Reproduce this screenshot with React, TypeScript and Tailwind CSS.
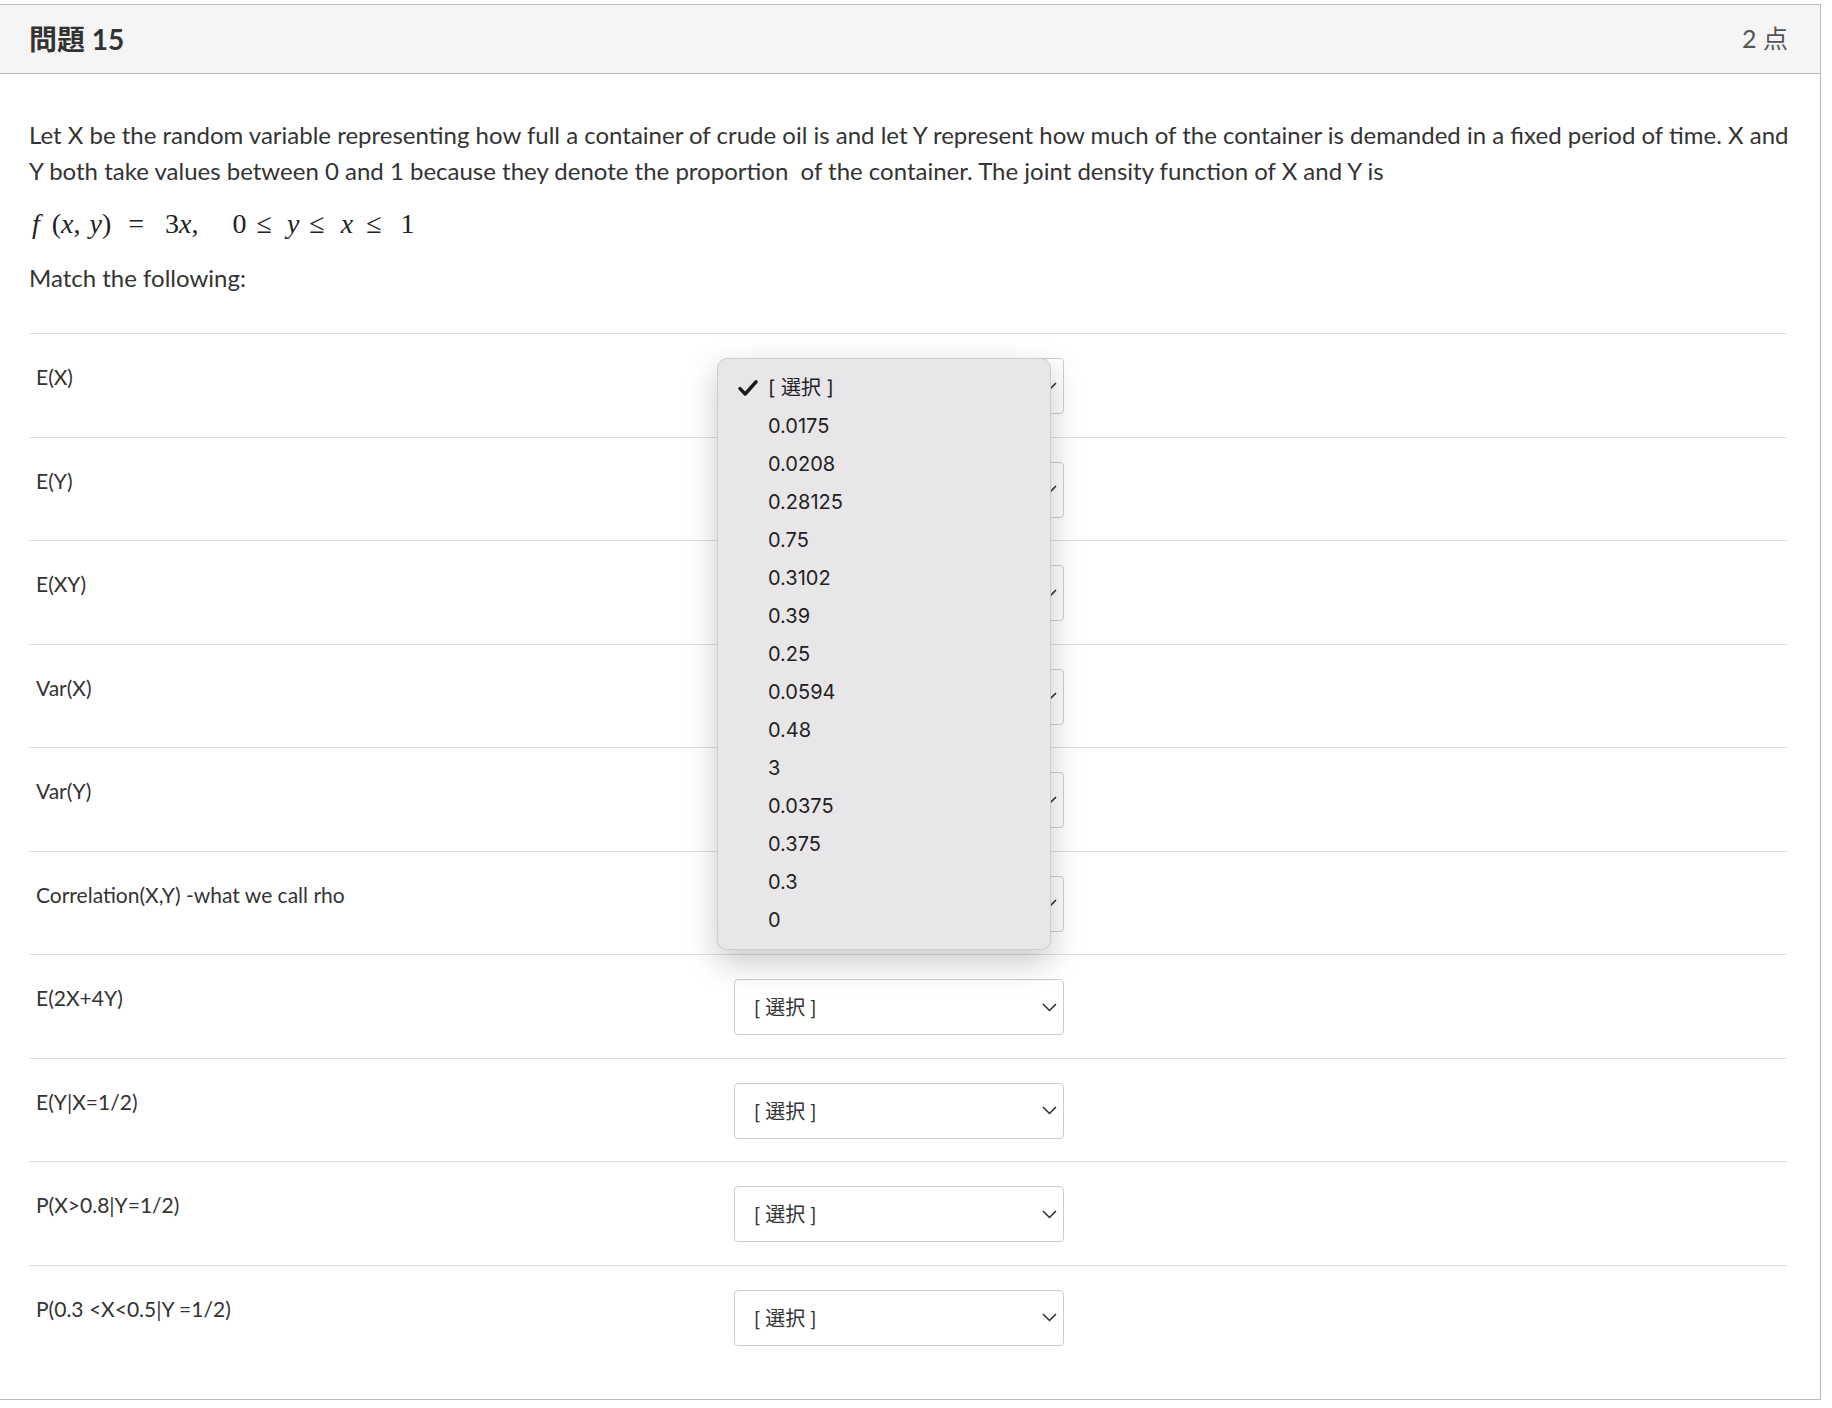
import { Fragment } from 'react';

const rows = [
  'E(X)',
  'E(Y)',
  'E(XY)',
  'Var(X)',
  'Var(Y)',
  'Correlation(X,Y) -what we call rho',
  'E(2X+4Y)',
  'E(Y|X=1/2)',
  'P(X>0.8|Y=1/2)',
  'P(0.3 <X<0.5|Y =1/2)',
];

const options = [
  '[ 選択 ]',
  '0.0175',
  '0.0208',
  '0.28125',
  '0.75',
  '0.3102',
  '0.39',
  '0.25',
  '0.0594',
  '0.48',
  '3',
  '0.0375',
  '0.375',
  '0.3',
  '0',
];

function Chevron() {
  return (
    <svg width="15" height="9" viewBox="0 0 15 9" fill="none">
      <polyline points="1,1 7.5,7.5 14,1" stroke="#333" strokeWidth="1.6" strokeLinejoin="round" />
    </svg>
  );
}

function Check() {
  return (
    <svg width="20" height="16" viewBox="0 0 20 16" fill="none">
      <path d="M2 8.6 L7.2 14 L18 1.8" stroke="#1a1a1a" strokeWidth="3.4" strokeLinecap="round" strokeLinejoin="round" />
    </svg>
  );
}

// the native select menu that is open over the first answer
function OpenMenu() {
  return (
    <div className="absolute left-[-17px] top-0 z-10 w-[334px] rounded-[10px] border border-[#cfcbcf] bg-[#e9e6e9] py-[10px] shadow-[0_12px_32px_rgba(0,0,0,0.22)] font-['Inter','Noto_Sans_CJK_JP',sans-serif] text-[20px] text-[#222]">
      {options.map((o, i) => (
        <div key={o} className="flex h-[38px] items-center">
          <div className="flex w-[50px] justify-end pr-[10px]">{i === 0 ? <Check /> : null}</div>
          <span>{o}</span>
        </div>
      ))}
    </div>
  );
}

function Select({ open }: { open?: boolean }) {
  return (
    <div className="relative w-[330px]">
      <div className="flex h-[56px] items-center justify-between rounded-[4px] border border-[#cdcdcd] bg-white pl-[19px] pr-[6px] text-[20px] text-[#333]">
        <span>[ 選択 ]</span>
        <Chevron />
      </div>
      {open ? <OpenMenu /> : null}
    </div>
  );
}

export default function App() {
  return (
    <div className="min-h-screen bg-white pt-[4px] font-['Lato','Noto_Sans_CJK_JP',sans-serif] text-[#333]">
      <div className="w-[1821px] border-b border-r border-t border-[#bcbcbc]">
        <div className="flex h-[69px] items-center justify-between border-b border-[#bcbcbc] bg-[#f5f5f5] pl-[29px] pr-[32px]">
          <h2 className="text-[28px] font-bold text-[#333]">問題 15</h2>
          <span className="text-[25px] text-[#555]">2 点</span>
        </div>

        <div className="pl-[29px] pr-[24px] pt-[43px] pb-[31px]">
          <p className="text-[24px] leading-[36px]">
            Let X be the random variable representing how full a container of crude oil is and let Y represent how much of
            the container is demanded in a fixed period of time. X and Y both take values between 0 and 1 because they
            denote the proportion&nbsp; of the container. The joint density function of X and Y is
          </p>

          <div className="mt-[17px] flex h-[36px] items-center pl-[3px] font-['Liberation_Serif',serif] text-[28px] text-[#222]">
            <i>f</i>
            <span className="ml-[12px]">(</span>
            <i>x</i>
            <span>,</span>
            <i className="ml-[9px]">y</i>
            <span>)</span>
            <span className="ml-[17px]">=</span>
            <span className="ml-[21px]">3</span>
            <i>x</i>
            <span>,</span>
            <span className="ml-[34px]">0</span>
            <span className="ml-[10px]">≤</span>
            <i className="ml-[15px]">y</i>
            <span className="ml-[10px]">≤</span>
            <i className="ml-[16px]">x</i>
            <span className="ml-[13px]">≤</span>
            <span className="ml-[19px]">1</span>
          </div>

          <p className="mt-[18px] text-[24px] leading-[36px]">Match the following:</p>

          <div className="mt-[37px] mr-[9px]">
            {rows.map((label, i) => (
              <Fragment key={label}>
                <div className="grid grid-cols-[705px_330px_1fr] items-start border-t border-[#dedede]">
                  <div className="pl-[7px] pt-[28px] text-[21px] leading-[30px]">{label}</div>
                  <div className="pt-[24px] pb-[22.5px]">
                    <Select open={i === 0} />
                  </div>
                  <div />
                </div>
              </Fragment>
            ))}
          </div>
        </div>
      </div>
    </div>
  );
}
